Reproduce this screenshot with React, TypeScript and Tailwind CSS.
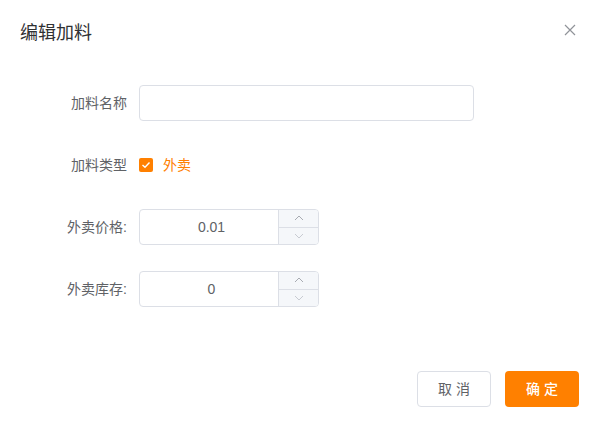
import React from 'react';

const font = { fontFamily: '"Liberation Sans", "Noto Sans CJK SC", sans-serif' };

const Label = ({ children }: { children: React.ReactNode }) => (
  <div className="w-[127px] text-right text-sm text-[#606266] shrink-0">{children}</div>
);

const NumberInput = ({ value }: { value: string }) => (
  <div className="ml-3 w-[180px] h-9 flex border border-[#dcdfe6] rounded bg-white overflow-hidden">
    <div className="flex-1 flex items-center justify-center pl-[15px] pr-[10px] text-sm text-[#606266]">{value}</div>
    <div className="w-10 flex flex-col border-l border-[#dcdfe6] bg-[#f5f7fa]">
      <div className="flex-1 flex items-center justify-center border-b border-[#dcdfe6]">
        <svg width="10" height="6" viewBox="0 0 10 6" fill="none">
          <path d="M1 5L5 1L9 5" stroke="#a8abb2" strokeWidth="1" />
        </svg>
      </div>
      <div className="flex-1 flex items-center justify-center">
        <svg width="10" height="6" viewBox="0 0 10 6" fill="none">
          <path d="M1 1L5 5L9 1" stroke="#c8cbd2" strokeWidth="1" />
        </svg>
      </div>
    </div>
  </div>
);

export default function App() {
  return (
    <div className="w-[598px] h-[425px] bg-white flex flex-col" style={font}>
      {/* header */}
      <div className="flex items-center justify-between pl-5 pr-[22px] pt-[21px]">
        <h1 className="text-lg leading-6 text-[#303133]">编辑加料</h1>
        <svg width="12" height="12" viewBox="0 0 12 12" className="-mt-[7px]">
          <path d="M1 1L11 11M11 1L1 11" stroke="#909399" strokeWidth="1.2" />
        </svg>
      </div>

      {/* form */}
      <div className="flex flex-col gap-[26px] pt-10">
        <div className="flex items-center h-9">
          <Label>加料名称</Label>
          <div className="ml-3 w-[335px] h-9 border border-[#dcdfe6] rounded bg-white" />
        </div>
        <div className="flex items-center h-9">
          <Label>加料类型</Label>
          <div className="ml-3 flex items-center">
            <span className="w-[14px] h-[14px] rounded-[2px] bg-[#ff8000] flex items-center justify-center">
              <svg width="10" height="8" viewBox="0 0 10 8" fill="none">
                <path d="M1.5 4L4 6.3L8.5 1.5" stroke="white" strokeWidth="1.4" />
              </svg>
            </span>
            <span className="ml-[10px] text-sm text-[#ff8000]">外卖</span>
          </div>
        </div>
        <div className="flex items-center h-9">
          <Label>外卖价格:</Label>
          <NumberInput value="0.01" />
        </div>
        <div className="flex items-center h-9">
          <Label>外卖库存:</Label>
          <NumberInput value="0" />
        </div>
      </div>

      {/* footer */}
      <div className="flex justify-end gap-[14px] pr-[19px] pt-16">
        <button className="w-[74px] h-9 border border-[#dcdfe6] rounded bg-white text-sm text-[#606266]">取 消</button>
        <button className="w-[74px] h-9 rounded bg-[#ff8000] text-sm font-medium text-white">确 定</button>
      </div>
    </div>
  );
}
